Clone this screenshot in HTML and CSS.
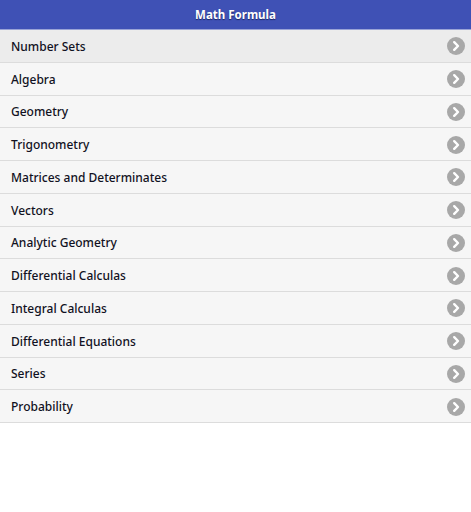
FILE: index.html
```html
<!DOCTYPE html>
<html>
<head>
<meta charset="utf-8">
<link rel="stylesheet" href="styles.css">
</head>
<body>
<header class="bar"><h1 class="title">Math Formula</h1></header>
<ul class="list">
  <li class="item item-active"><span class="label">Number Sets</span><svg class="arrow" viewBox="0 0 18 18"><circle cx="9" cy="9" r="9"/><path d="M7.2 5.2L11 9l-3.8 3.8"/></svg></li>
  <li class="item"><span class="label">Algebra</span><svg class="arrow" viewBox="0 0 18 18"><circle cx="9" cy="9" r="9"/><path d="M7.2 5.2L11 9l-3.8 3.8"/></svg></li>
  <li class="item"><span class="label">Geometry</span><svg class="arrow" viewBox="0 0 18 18"><circle cx="9" cy="9" r="9"/><path d="M7.2 5.2L11 9l-3.8 3.8"/></svg></li>
  <li class="item"><span class="label">Trigonometry</span><svg class="arrow" viewBox="0 0 18 18"><circle cx="9" cy="9" r="9"/><path d="M7.2 5.2L11 9l-3.8 3.8"/></svg></li>
  <li class="item"><span class="label">Matrices and Determinates</span><svg class="arrow" viewBox="0 0 18 18"><circle cx="9" cy="9" r="9"/><path d="M7.2 5.2L11 9l-3.8 3.8"/></svg></li>
  <li class="item"><span class="label">Vectors</span><svg class="arrow" viewBox="0 0 18 18"><circle cx="9" cy="9" r="9"/><path d="M7.2 5.2L11 9l-3.8 3.8"/></svg></li>
  <li class="item"><span class="label">Analytic Geometry</span><svg class="arrow" viewBox="0 0 18 18"><circle cx="9" cy="9" r="9"/><path d="M7.2 5.2L11 9l-3.8 3.8"/></svg></li>
  <li class="item"><span class="label">Differential Calculas</span><svg class="arrow" viewBox="0 0 18 18"><circle cx="9" cy="9" r="9"/><path d="M7.2 5.2L11 9l-3.8 3.8"/></svg></li>
  <li class="item"><span class="label">Integral Calculas</span><svg class="arrow" viewBox="0 0 18 18"><circle cx="9" cy="9" r="9"/><path d="M7.2 5.2L11 9l-3.8 3.8"/></svg></li>
  <li class="item"><span class="label">Differential Equations</span><svg class="arrow" viewBox="0 0 18 18"><circle cx="9" cy="9" r="9"/><path d="M7.2 5.2L11 9l-3.8 3.8"/></svg></li>
  <li class="item"><span class="label">Series</span><svg class="arrow" viewBox="0 0 18 18"><circle cx="9" cy="9" r="9"/><path d="M7.2 5.2L11 9l-3.8 3.8"/></svg></li>
  <li class="item"><span class="label">Probability</span><svg class="arrow" viewBox="0 0 18 18"><circle cx="9" cy="9" r="9"/><path d="M7.2 5.2L11 9l-3.8 3.8"/></svg></li>
</ul>
</body>
</html>
```
FILE: styles.css
```css
html, body {
  margin: 0;
  padding: 0;
  background: #ffffff;
}
body {
  font-family: "Noto Sans", "Open Sans", sans-serif;
}
.bar {
  height: 29px;
  background: #3f51b5;
  border-bottom: 1px solid #9aa3d6;
  display: flex;
  align-items: center;
  justify-content: center;
}
.title {
  margin: 0;
  color: #ffffff;
  font-size: 11.5px;
  font-weight: 700;
  text-shadow: 0 1px 1px #1c2660;
}
.list {
  list-style: none;
  margin: 0;
  padding: 0;
}
.item {
  box-sizing: border-box;
  height: 32.75px;
  display: flex;
  align-items: center;
  justify-content: space-between;
  padding: 1px 6px 0 11px;
  background: #f6f6f6;
  border-bottom: 1px solid #dcdcdc;
}
.item-active {
  background: #ececec;
}
.label {
  font-size: 12px;
  font-weight: 500;
  color: #111122;
}
.arrow {
  width: 18px;
  height: 18px;
}
.arrow circle {
  fill: #a8a8a8;
}
.arrow path {
  fill: none;
  stroke: #ffffff;
  stroke-width: 2.4;
  stroke-linecap: round;
  stroke-linejoin: round;
}
```
